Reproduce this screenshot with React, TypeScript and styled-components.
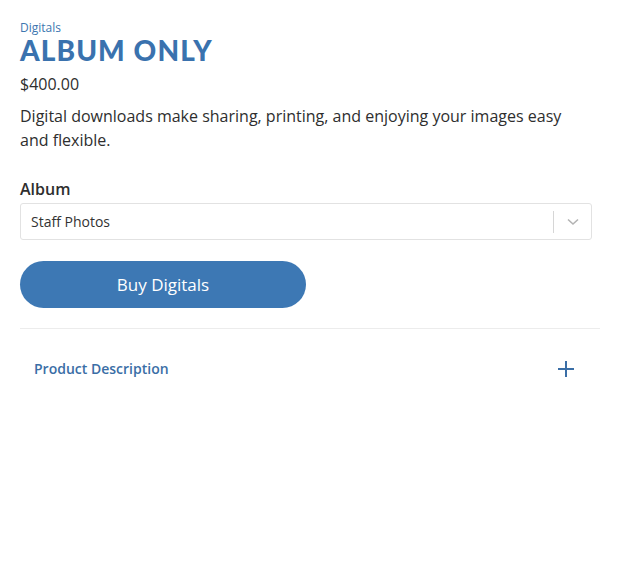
import React from "react";
import styled, { createGlobalStyle } from "styled-components";

const Global = createGlobalStyle`
  html, body { margin: 0; padding: 0; background: #fff; }
  body { font-family: "Open Sans", "Liberation Sans", sans-serif; color: #2b2b2b; }
  * { box-sizing: border-box; }
`;

const Page = styled.div`
  width: 620px;
  height: 576px;
  padding: 20px 20px 0 20px;
  display: flex;
  flex-direction: column;
`;

const Content = styled.div`
  width: 572px;
  display: flex;
  flex-direction: column;
`;

const Category = styled.div`
  font-size: 12px;
  line-height: 16px;
  color: #3d76b0;
`;

const Title = styled.h1`
  margin: 0;
  font-family: "Lato", "Open Sans", sans-serif;
  font-weight: 900;
  font-size: 28px;
  line-height: 28px;
  letter-spacing: 1.1px;
  color: #3a72ae;
`;

const Price = styled.div`
  margin-top: 9px;
  font-size: 16px;
  line-height: 22px;
  color: #2e2e2e;
`;

const Description = styled.p`
  margin: 9px 0 0 0;
  font-size: 16px;
  line-height: 24px;
  color: #2e2e2e;
`;

const Label = styled.div`
  margin-top: 26px;
  font-size: 16px;
  font-weight: 600;
  line-height: 22px;
  color: #2e2e2e;
`;

const Select = styled.div`
  margin-top: 3px;
  height: 37px;
  border: 1px solid #e2e2e2;
  border-radius: 3px;
  display: flex;
  align-items: center;
  padding-left: 10px;
`;

const SelectValue = styled.div`
  flex: 1;
  font-size: 14px;
  color: #333;
`;

const Separator = styled.div`
  width: 1px;
  height: 22px;
  background: #d6d6d6;
`;

const Chevron = styled.div`
  width: 37px;
  display: flex;
  align-items: center;
  justify-content: center;
  color: #b3b3b3;
`;

const BuyButton = styled.button`
  margin-top: 21px;
  width: 286px;
  height: 47px;
  border: none;
  border-radius: 24px;
  background: #3d78b4;
  color: #fff;
  font-family: "Open Sans", sans-serif;
  font-size: 17px;
  font-weight: 400;
  cursor: pointer;
`;

const Divider = styled.hr`
  margin: 20px 0 0 0;
  width: 580px;
  border: none;
  border-top: 1px solid #ececec;
`;

const AccordionRow = styled.div`
  margin-top: 30px;
  display: flex;
  align-items: center;
  justify-content: space-between;
  padding: 0 25px 0 14px;
  width: 580px;
`;

const AccordionTitle = styled.div`
  font-size: 14px;
  font-weight: 600;
  color: #3a6ea6;
  line-height: 20px;
`;

export default function App() {
  return (
    <>
      <Global />
      <Page>
        <Content>
          <Category>Digitals</Category>
          <Title>ALBUM ONLY</Title>
          <Price>$400.00</Price>
          <Description>
            Digital downloads make sharing, printing, and enjoying your images easy and flexible.
          </Description>
          <Label>Album</Label>
          <Select>
            <SelectValue>Staff Photos</SelectValue>
            <Separator />
            <Chevron>
              <svg width="12" height="8" viewBox="0 0 12 8" fill="none">
                <path d="M1 1.5 L6 6 L11 1.5" stroke="currentColor" strokeWidth="1.6" />
              </svg>
            </Chevron>
          </Select>
          <BuyButton>Buy Digitals</BuyButton>
        </Content>
        <Divider />
        <AccordionRow>
          <AccordionTitle>Product Description</AccordionTitle>
          <svg width="18" height="18" viewBox="0 0 18 18" fill="none">
            <path d="M9 1 V17 M1 9 H17" stroke="#3a6ea6" strokeWidth="2" />
          </svg>
        </AccordionRow>
      </Page>
    </>
  );
}
